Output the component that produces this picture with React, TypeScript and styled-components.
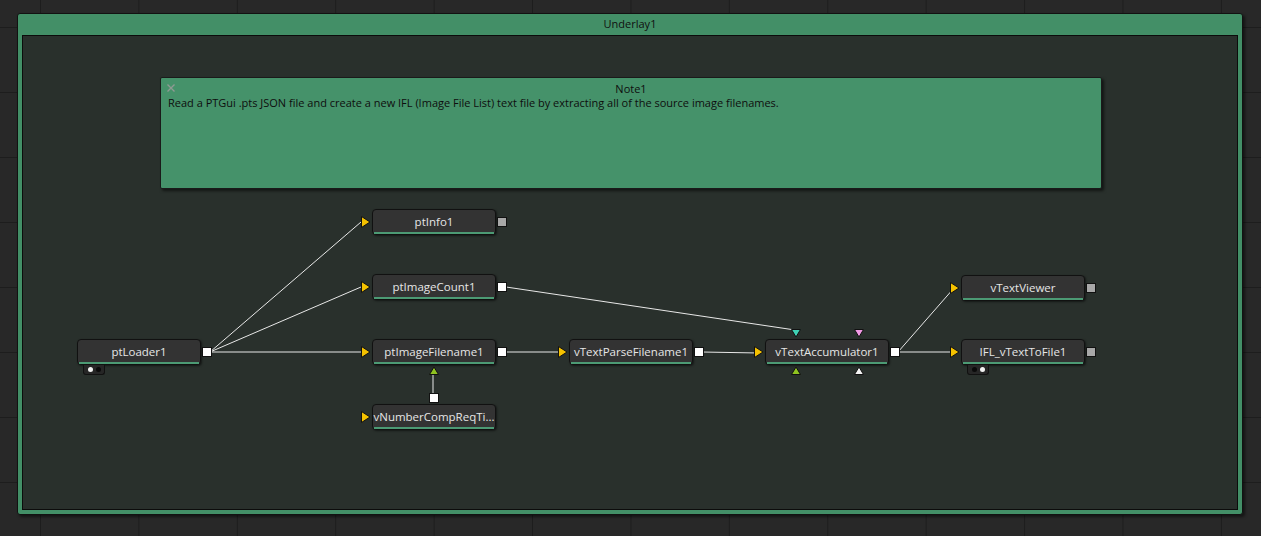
import React from "react";
import styled, { createGlobalStyle } from "styled-components";

const Global = createGlobalStyle`
  html, body { margin: 0; padding: 0; background: #282828; }
  body { font-family: "Open Sans", "Liberation Sans", sans-serif; }
`;

const Page = styled.div`
  width: 1261px;
  height: 536px;
  box-sizing: border-box;
  padding: 13px 18px 0 17px;
  background-color: #282828;
  background-image:
    linear-gradient(to right, #1d1d1d 1px, transparent 1px),
    linear-gradient(to bottom, #1d1d1d 1px, transparent 1px);
  background-size: 98.42px 65px;
  background-position: 40px 27px;
  overflow: hidden;
`;

const Underlay = styled.div`
  width: 1226px;
  height: 502px;
  box-sizing: border-box;
  background: #438f67;
  border: 1px solid #121212;
  border-radius: 3px;
  box-shadow: 2px 2px 3px rgba(0, 0, 0, 0.5);
  padding: 0 4px 4px 4px;
  display: flex;
  flex-direction: column;
`;

const UnderlayTitle = styled.div`
  height: 21px;
  line-height: 19px;
  text-align: center;
  font-size: 11px;
  color: #101010;
`;

const Canvas = styled.div`
  flex: 1;
  position: relative;
  background: #29302c;
  border: 1px solid #0c0c0c;
`;

const Wires = styled.svg`
  position: absolute;
  left: 0;
  top: 0;
  width: 100%;
  height: 100%;
  overflow: visible;
`;

const Note = styled.div<{ $x: number; $y: number; $w: number; $h: number }>`
  position: absolute;
  left: ${(p) => p.$x}px;
  top: ${(p) => p.$y}px;
  width: ${(p) => p.$w}px;
  height: ${(p) => p.$h}px;
  box-sizing: border-box;
  background: #45926a;
  border: 1px solid #1a1a1a;
  border-radius: 2px;
  box-shadow: 2px 2px 3px rgba(0, 0, 0, 0.55);
  padding: 0 7px;
  color: #0e0e0e;
`;

const NoteTitle = styled.div`
  height: 18px;
  line-height: 21px;
  text-align: center;
  font-size: 11px;
`;

const NoteText = styled.div`
  font-size: 11px;
  line-height: 14px;
`;

const CloseMark = styled.svg`
  position: absolute;
  left: 6px;
  top: 6px;
  width: 8px;
  height: 8px;
`;

const Node = styled.div<{ $x: number; $y: number }>`
  position: absolute;
  left: ${(p) => p.$x}px;
  top: ${(p) => p.$y}px;
  width: 124px;
  height: 26px;
  box-sizing: border-box;
  background: #333333;
  border: 1px solid #111111;
  border-radius: 4px;
  box-shadow: 1px 1px 2px rgba(0, 0, 0, 0.5);
  display: flex;
  align-items: center;
  justify-content: center;
  padding-bottom: 2px;
  color: #e6e6e6;
  font-size: 11.5px;
  white-space: nowrap;
  &::after {
    content: "";
    position: absolute;
    left: 1px;
    right: 1px;
    bottom: 0;
    height: 2px;
    background: #4c9a74;
  }
`;

const InputTri = styled.svg`
  position: absolute;
  left: -12px;
  top: 6px;
  width: 10px;
  height: 12px;
  overflow: visible;
`;

const OutSquare = styled.div<{ $on: boolean }>`
  position: absolute;
  right: -12px;
  top: 7px;
  width: 8px;
  height: 8px;
  background: ${(p) => (p.$on ? "#ffffff" : "#a8a8a8")};
  border: 1px solid #111;
`;

const PortTri = styled.svg<{ $x: number; $y: number }>`
  position: absolute;
  left: ${(p) => p.$x}px;
  top: ${(p) => p.$y}px;
  width: 10px;
  height: 9px;
  overflow: visible;
`;

const TopSquare = styled.div`
  position: absolute;
  left: 56px;
  top: -12px;
  width: 8px;
  height: 8px;
  background: #ffffff;
  border: 1px solid #111;
`;

const Tab = styled.div`
  position: absolute;
  left: 5px;
  top: 25px;
  width: 22px;
  height: 10px;
  box-sizing: border-box;
  background: #262626;
  border: 1px solid #111;
  border-top: none;
  border-radius: 0 0 3px 3px;
  display: flex;
  align-items: center;
  justify-content: center;
  gap: 3px;
`;

const Dot = styled.span<{ $on: boolean }>`
  width: 5px;
  height: 5px;
  border-radius: 50%;
  background: ${(p) => (p.$on ? "#f2f2f2" : "#0a0a0a")};
`;

const OX = 23;
const OY = 36;

type NodeDef = {
  name: string;
  x: number;
  y: number;
  out: boolean | null;
  input?: boolean;
  tab?: [boolean, boolean];
  bottomTri?: string;
  topSquare?: boolean;
  acc?: boolean;
};

const nodes: NodeDef[] = [
  { name: "ptLoader1", x: 77, y: 339, out: true, input: false, tab: [true, false] },
  { name: "ptInfo1", x: 372, y: 209, out: false, input: true },
  { name: "ptImageCount1", x: 372, y: 274, out: true, input: true },
  { name: "ptImageFilename1", x: 372, y: 339, out: true, input: true, bottomTri: "#8fc320" },
  { name: "vNumberCompReqTi...", x: 372, y: 404, out: null, input: true, topSquare: true },
  { name: "vTextParseFilename1", x: 569, y: 339, out: true, input: true },
  { name: "vTextAccumulator1", x: 765, y: 339, out: true, input: true, acc: true },
  { name: "vTextViewer", x: 961, y: 275, out: false, input: true },
  { name: "IFL_vTextToFile1", x: 961, y: 339, out: false, input: true, tab: [false, true] },
];

const wires: [number, number, number, number][] = [
  [210, 352, 361, 222],
  [210, 352, 361, 287],
  [210, 352, 361, 352],
  [506, 287, 795, 330],
  [506, 352, 562, 352],
  [702, 352, 759, 353],
  [898, 352, 954, 288],
  [898, 352, 954, 352],
  [433, 374, 433, 393],
];

const Down = ({ c }: { c: string }) => (
  <polygon points="0.5,0.5 9.5,0.5 5,8" fill={c} stroke="#111" strokeWidth="1" />
);
const Up = ({ c }: { c: string }) => (
  <polygon points="0.5,8.5 9.5,8.5 5,1" fill={c} stroke="#111" strokeWidth="1" />
);

export default function App() {
  return (
    <>
      <Global />
      <Page>
        <Underlay>
          <UnderlayTitle>Underlay1</UnderlayTitle>
          <Canvas>
            <Note $x={160 - OX} $y={77 - OY} $w={942} $h={112}>
              <CloseMark viewBox="0 0 8 8">
                <path d="M0.5 0.5 L7.5 7.5 M7.5 0.5 L0.5 7.5" stroke="#8f9a93" strokeWidth="1.4" />
              </CloseMark>
              <NoteTitle>Note1</NoteTitle>
              <NoteText>
                Read a PTGui .pts JSON file and create a new IFL (Image File List) text file by extracting all of the source image filenames.
              </NoteText>
            </Note>
            <Wires>
              <g transform={`translate(${-OX},${-OY})`} stroke="#e8e8e8" strokeWidth="1" fill="none">
                {wires.map(([x1, y1, x2, y2], i) => (
                  <line key={i} x1={x1} y1={y1} x2={x2} y2={y2} />
                ))}
              </g>
            </Wires>
            {nodes.map((n) => (
              <Node key={n.name} $x={n.x - OX} $y={n.y - OY}>
                {n.name}
                {n.input && (
                  <InputTri viewBox="0 0 10 12">
                    <polygon points="0.5,0.5 9,6 0.5,11.5" fill="#f5c200" stroke="#111" strokeWidth="1" />
                  </InputTri>
                )}
                {n.out !== null && <OutSquare $on={n.out} />}
                {n.tab && (
                  <Tab>
                    <Dot $on={n.tab[0]} />
                    <Dot $on={n.tab[1]} />
                  </Tab>
                )}
                {n.bottomTri && (
                  <PortTri $x={56} $y={26} viewBox="0 0 10 9">
                    <Up c={n.bottomTri} />
                  </PortTri>
                )}
                {n.topSquare && <TopSquare />}
                {n.acc && (
                  <>
                    <PortTri $x={25} $y={-11} viewBox="0 0 10 9">
                      <Down c="#3fd2b4" />
                    </PortTri>
                    <PortTri $x={88} $y={-11} viewBox="0 0 10 9">
                      <Down c="#f29ae6" />
                    </PortTri>
                    <PortTri $x={25} $y={26} viewBox="0 0 10 9">
                      <Up c="#8fc320" />
                    </PortTri>
                    <PortTri $x={88} $y={26} viewBox="0 0 10 9">
                      <Up c="#f4f4f4" />
                    </PortTri>
                  </>
                )}
              </Node>
            ))}
          </Canvas>
        </Underlay>
      </Page>
    </>
  );
}
